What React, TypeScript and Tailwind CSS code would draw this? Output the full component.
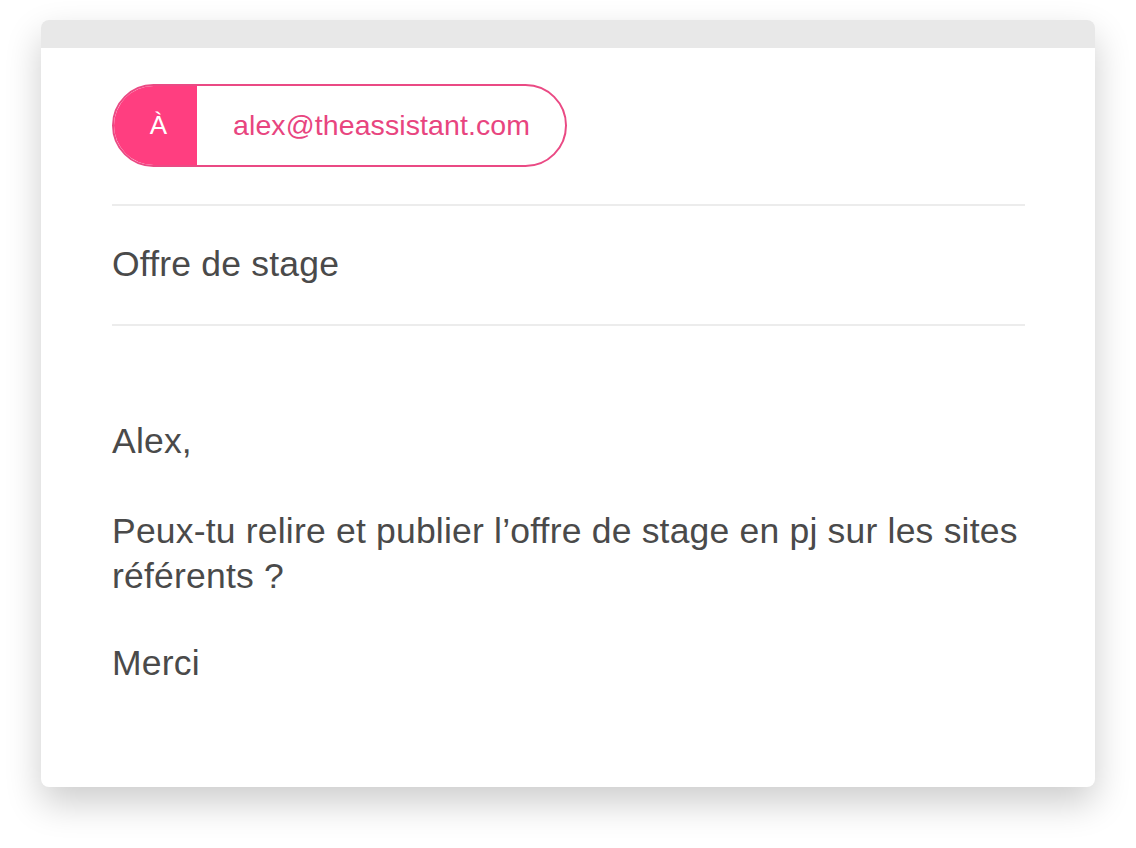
import React from "react";

export default function App() {
  return (
    <div className="w-[1136px] h-[848px] bg-white pt-[20px] pl-[41px]" style={{ fontFamily: '"Liberation Sans", Arial, sans-serif' }}>
      <div className="w-[1054px] h-[767px] bg-white rounded-[8px] overflow-hidden shadow-[0_16px_36px_rgba(0,0,0,0.2)]">
        <div className="h-[28px] bg-[#e8e8e8]" />
        <div className="pl-[71px] pr-[70px] pt-[36px]">
          <div className="flex h-[83px] w-[455px] rounded-full border-2 border-[#ea4a84] overflow-hidden">
            <div className="w-[83px] bg-[#ff3e80] flex items-center justify-center pl-[6px] text-white text-[26px]">À</div>
            <div className="flex-1 flex items-center pl-[36px] text-[#e8457f] text-[28.5px] tracking-[0.1px]">alex@theassistant.com</div>
          </div>
          <div className="mt-[37px] h-[2px] bg-[#ececec]" />
          <div className="h-[118px] flex items-center text-[35.5px] tracking-[0.2px] text-[#4a4a4a]">Offre de stage</div>
          <div className="h-[2px] bg-[#ececec]" />
          <div className="pt-[93px] text-[35.5px] leading-[45px] tracking-[0.2px] text-[#4a4a4a]">
            <p>Alex,</p>
            <p className="mt-[45px]">Peux-tu relire et publier l’offre de stage en pj sur les sites référents ?</p>
            <p className="mt-[42px]">Merci</p>
          </div>
        </div>
      </div>
    </div>
  );
}
